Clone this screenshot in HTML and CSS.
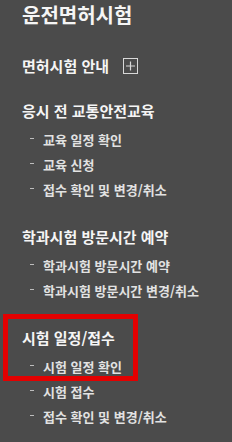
FILE: index.html
```html
<!DOCTYPE html>
<html lang="ko">
<head>
    <meta charset="UTF-8">
    <meta name="viewport" content="width=device-width, initial-scale=1.0">
    <title>운전면허시험</title>
    <link rel="stylesheet" href="styles.css">
</head>
<body>
    <h1 class="menu-title">운전면허시험</h1>

    <div class="menu">
        <!-- 면허시험 안내 -->
        <div class="menu-section">
            <h2 class="menu-heading">
                면허시험 안내
                <svg class="plus-icon" width="15" height="16" viewBox="0 0 15 16">
                    <rect x="0.5" y="0.5" width="14" height="15" fill="none" stroke="#d8d8d8" stroke-width="1"/>
                    <path d="M7.5 3.5v9M3 8h9" stroke="#d8d8d8" stroke-width="1.2"/>
                </svg>
            </h2>
        </div>

        <!-- 응시 전 교통안전교육 -->
        <div class="menu-section">
            <h2 class="menu-heading">응시 전 교통안전교육</h2>
            <ul class="sub-list">
                <li class="sub-item">교육 일정 확인</li>
                <li class="sub-item">교육 신청</li>
                <li class="sub-item">접수 확인 및 변경/취소</li>
            </ul>
        </div>

        <!-- 학과시험 방문시간 예약 -->
        <div class="menu-section">
            <h2 class="menu-heading">학과시험 방문시간 예약</h2>
            <ul class="sub-list">
                <li class="sub-item">학과시험 방문시간 예약</li>
                <li class="sub-item">학과시험 방문시간 변경/취소</li>
            </ul>
        </div>

        <!-- 시험 일정/접수 -->
        <div class="menu-section highlighted">
            <div class="highlight-box"></div>
            <h2 class="menu-heading">시험 일정/접수</h2>
            <ul class="sub-list">
                <li class="sub-item">시험 일정 확인</li>
                <li class="sub-item">시험 접수</li>
                <li class="sub-item">접수 확인 및 변경/취소</li>
            </ul>
        </div>
    </div>
</body>
</html>
```

FILE: styles.css
```css
body {
    margin: 0;
    background-color: #4b4b4b;
    font-family: "Noto Sans CJK KR", "Noto Sans", sans-serif;
    color: #f5f5f5;
    height: 442px;
    overflow: hidden;
}
.menu-title {
    margin: 0;
    padding-left: 22px;
    font-size: 20px;
    line-height: 29px;
    font-weight: bold;
}
.menu {
    padding-top: 27px;
}
.menu-section {
    position: relative;
    padding-left: 22px;
    margin-bottom: 25px;
}
.menu-heading {
    margin: 0;
    display: flex;
    align-items: center;
    gap: 14px;
    font-size: 15px;
    line-height: 20px;
    font-weight: bold;
}
.plus-icon {
    display: block;
}
.sub-list {
    list-style: none;
    margin: 6px 0 0;
    padding: 0 0 0 8px;
}
.sub-item {
    display: flex;
    align-items: center;
    gap: 9px;
    font-size: 13px;
    line-height: 25px;
    font-weight: bold;
    color: #e2e2e2;
}
.sub-item::before {
    content: "";
    width: 4px;
    height: 1px;
    margin-bottom: 3px;
    background-color: #bdbdbd;
}
.highlight-box {
    position: absolute;
    top: -14px;
    left: 3px;
    width: 135px;
    height: 67px;
    box-sizing: border-box;
    border: 5px solid #e30000;
}
```
